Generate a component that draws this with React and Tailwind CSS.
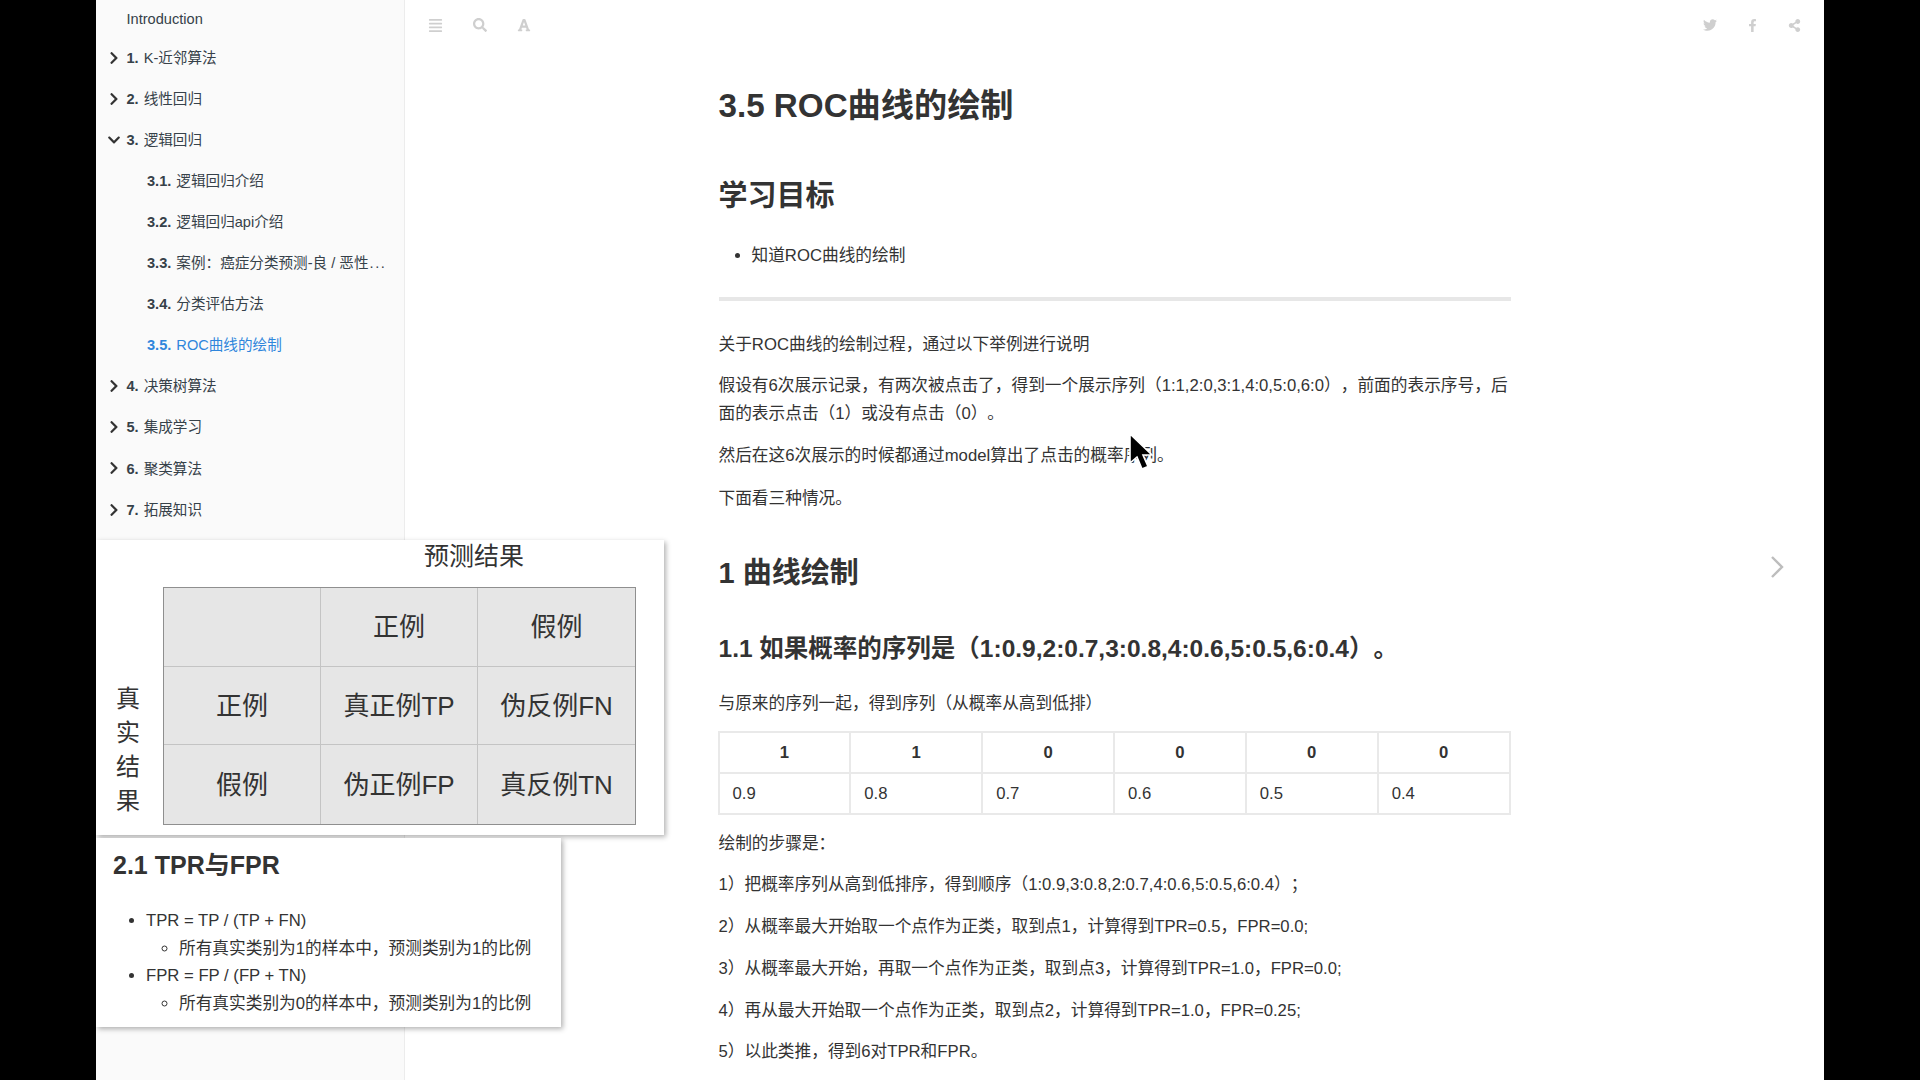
import { FaAlignJustify, FaSearch, FaFont, FaTwitter, FaFacebookF, FaShareAlt, FaChevronRight, FaChevronDown } from "react-icons/fa";

const chapters = [
  { num: "1.", title: "K-近邻算法" },
  { num: "2.", title: "线性回归" },
  { num: "3.", title: "逻辑回归", open: true },
];
const subs = [
  { num: "3.1.", title: "逻辑回归介绍" },
  { num: "3.2.", title: "逻辑回归api介绍" },
  { num: "3.3.", title: "案例：癌症分类预测-良 / 恶性", more: true },
  { num: "3.4.", title: "分类评估方法" },
  { num: "3.5.", title: "ROC曲线的绘制", active: true },
];
const rest = [
  { num: "4.", title: "决策树算法" },
  { num: "5.", title: "集成学习" },
  { num: "6.", title: "聚类算法" },
  { num: "7.", title: "拓展知识" },
];

function Chapter({ item }) {
  return (
    <div className="flex h-[41.1px] items-center">
      <div className="w-[30.5px] pl-[11px] text-[#333]">
        {item.open ? <FaChevronDown className="text-[14px] -mt-[1px]" /> : <FaChevronRight className="text-[14px] -mt-[2px]" />}
      </div>
      <b className="mr-[5px] font-bold">{item.num}</b>
      <span>{item.title}</span>
    </div>
  );
}

function Sidebar() {
  return (
    <div className="w-[309px] shrink-0 h-full bg-[#fafafa] border-r border-[#ececec] pt-[1px] text-[14.6px] text-[#364149]">
      <div className="flex h-[37px] items-center pl-[30.5px]">Introduction</div>
      {chapters.map((c) => <Chapter key={c.num} item={c} />)}
      {subs.map((s) => (
        <div key={s.num} className={`flex h-[41.1px] items-center pl-[51px] pr-[10px] ${s.active ? "text-[#2f86dc]" : ""}`}>
          <div className="whitespace-nowrap">
            <b className="mr-[5px] font-bold">{s.num}</b>
            {s.title}
            {s.more && <span className="ml-[1px] tracking-[1.6px]">...</span>}
          </div>
        </div>
      ))}
      {rest.map((c) => <Chapter key={c.num} item={c} />)}
    </div>
  );
}

function Header() {
  return (
    <div className="flex h-[50px] items-center justify-between pl-[23px] pr-[23px] text-[#cfcfcf]">
      <div className="flex items-center gap-[30px]">
        <FaAlignJustify className="text-[15px]" />
        <FaSearch className="text-[14px]" />
        <FaFont className="text-[14px]" />
      </div>
      <div className="flex items-center gap-[29px]">
        <FaTwitter className="text-[14px]" />
        <FaFacebookF className="text-[13px]" />
        <FaShareAlt className="text-[13px]" />
      </div>
    </div>
  );
}

function Article() {
  const probs = ["0.9", "0.8", "0.7", "0.6", "0.5", "0.4"];
  return (
    <div className="mx-auto w-[792px] text-[16.7px] leading-[28px] text-[#333]">
      <h1 className="mt-[33px] text-[33.2px] font-bold leading-[46px]">3.5 ROC曲线的绘制</h1>
      <h2 className="mt-[46px] text-[29px] font-bold leading-[42px]">学习目标</h2>
      <ul className="mt-[25px] list-disc pl-[33px]">
        <li>知道ROC曲线的绘制</li>
      </ul>
      <hr className="mt-[27px] h-[4px] border-0 bg-[#e7e7e7]" />
      <p className="mt-[30px]">关于ROC曲线的绘制过程，通过以下举例进行说明</p>
      <p className="mt-[13px]">假设有6次展示记录，有两次被点击了，得到一个展示序列（1:1,2:0,3:1,4:0,5:0,6:0），前面的表示序号，后面的表示点击（1）或没有点击（0）。</p>
      <p className="mt-[14px]">然后在这6次展示的时候都通过model算出了点击的概率序列。</p>
      <p className="mt-[15px]">下面看三种情况。</p>
      <h2 className="mt-[39px] text-[29px] font-bold leading-[42px]">1 曲线绘制</h2>
      <h3 className="mt-[34px] text-[24.5px] font-bold leading-[42px]">1.1 如果概率的序列是（1:0.9,2:0.7,3:0.8,4:0.6,5:0.5,6:0.4）。</h3>
      <p className="mt-[20px]">与原来的序列一起，得到序列（从概率从高到低排）</p>
      <table className="mt-[13px] -ml-[1px] w-[793px] table-fixed border-collapse">
        <thead>
          <tr>
            {["1", "1", "0", "0", "0", "0"].map((v, i) => (
              <th key={i} className="h-[41px] border-2 border-[#e9e9e9] pt-[1px] text-center font-bold">{v}</th>
            ))}
          </tr>
        </thead>
        <tbody>
          <tr>
            {probs.map((v) => (
              <td key={v} className="h-[41px] border-2 border-[#e9e9e9] px-[13px]">{v}</td>
            ))}
          </tr>
        </tbody>
      </table>
      <p className="mt-[15px]">绘制的步骤是：</p>
      <p className="mt-[13px]">1）把概率序列从高到低排序，得到顺序（1:0.9,3:0.8,2:0.7,4:0.6,5:0.5,6:0.4）；</p>
      <p className="mt-[14px]">2）从概率最大开始取一个点作为正类，取到点1，计算得到TPR=0.5，FPR=0.0;</p>
      <p className="mt-[14px]">3）从概率最大开始，再取一个点作为正类，取到点3，计算得到TPR=1.0，FPR=0.0;</p>
      <p className="mt-[14px]">4）再从最大开始取一个点作为正类，取到点2，计算得到TPR=1.0，FPR=0.25;</p>
      <p className="mt-[13px]">5）以此类推，得到6对TPR和FPR。</p>
    </div>
  );
}

function MatrixPanel() {
  const cells = ["", "正例", "假例", "正例", "真正例TP", "伪反例FN", "假例", "伪正例FP", "真反例TN"];
  return (
    <div className="absolute left-0 top-[540px] h-[295px] w-[568px] bg-white shadow-[2px_2px_5px_rgba(0,0,0,0.3)] text-[#333]">
      <div className="pl-[328px] pt-[1px] text-[25px] leading-[30px]">预测结果</div>
      <div className="mt-[16px] flex">
        <div className="flex w-[67px] flex-col items-center justify-end pb-[7px] pr-[3px] text-[24px] leading-[34px]">
          <span>真</span>
          <span>实</span>
          <span>结</span>
          <span>果</span>
        </div>
        <div className="grid h-[238px] w-[473px] grid-cols-3 grid-rows-3 border border-[#8f8f8f] bg-[#e6e6e6]">
          {cells.map((c, i) => (
            <div
              key={i}
              className={`flex items-center justify-center pt-[2px] text-[26px] border-[#c4c4c4] ${i % 3 !== 2 ? "border-r" : ""} ${i < 6 ? "border-b" : ""}`}
            >
              {c}
            </div>
          ))}
        </div>
      </div>
    </div>
  );
}

function TprPanel() {
  return (
    <div className="absolute left-0 top-[838px] h-[189px] w-[465px] bg-white pl-[17px] shadow-[2px_2px_5px_rgba(0,0,0,0.3)] text-[16.7px] leading-[27.6px] text-[#333]">
      <h3 className="pt-[9px] text-[25px] font-bold leading-[36px]">2.1 TPR与FPR</h3>
      <ul className="mt-[24px] list-disc pl-[33px]">
        <li>
          TPR = TP / (TP + FN)
          <ul className="list-[circle] pl-[33px]">
            <li>所有真实类别为1的样本中，预测类别为1的比例</li>
          </ul>
        </li>
        <li>
          FPR = FP / (FP + TN)
          <ul className="list-[circle] pl-[33px]">
            <li>所有真实类别为0的样本中，预测类别为1的比例</li>
          </ul>
        </li>
      </ul>
    </div>
  );
}

export default function App() {
  return (
    <div className="relative flex h-screen overflow-hidden bg-black px-[96px] font-['Liberation_Sans','Noto_Sans_CJK_SC',sans-serif] [text-spacing-trim:space-all]">
      <div className="relative flex h-full w-full bg-white">
        <Sidebar />
        <div className="relative flex-1 h-full overflow-hidden">
          <Header />
          <Article />
          {/* next page arrow */}
          <svg className="absolute left-[1365px] top-[555px] h-[24px] w-[14px] text-[#bdbdbd]" viewBox="0 0 14 24" fill="none" stroke="currentColor" strokeWidth="2.4">
            <path d="M2 2l10 10L2 22" />
          </svg>
          {/* mouse cursor from the recording */}
          <svg className="absolute left-[723px] top-[433px] h-[38px] w-[26px]" viewBox="0 0 26 38">
            <path d="M2 1v29l7-6 5 12 6-2.5-5-11.5h9z" fill="#000" stroke="#fff" strokeWidth="1.6" />
          </svg>
        </div>
        <MatrixPanel />
        <TprPanel />
      </div>
    </div>
  );
}
